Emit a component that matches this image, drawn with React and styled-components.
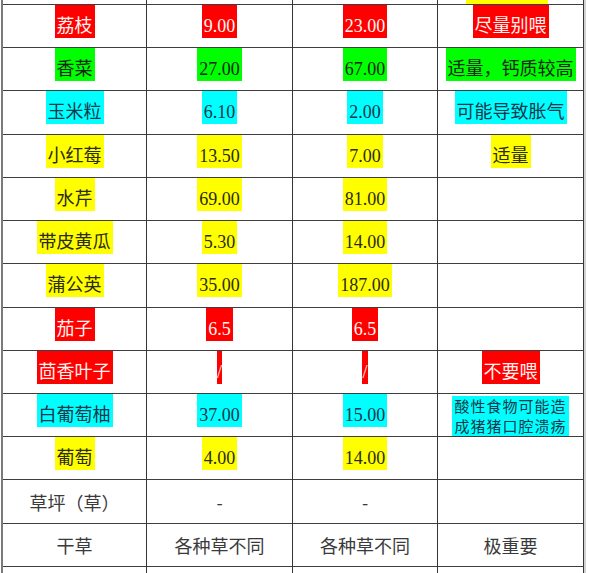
import styled, { createGlobalStyle } from "styled-components";

const GlobalStyle = createGlobalStyle`
  html, body {
    margin: 0;
    padding: 0;
    background: #ffffff;
    overflow: hidden;
  }
`;

// highlight colours copied from the sheet
const tones = {
  red: { bg: "#ff0000", fg: "#fff4f0" },
  green: { bg: "#00ff00", fg: "#152515" },
  cyan: { bg: "#00ffff", fg: "#17364a" },
  yellow: { bg: "#ffff00", fg: "#2b2b16" },
};

const rows = [
  [["荔枝", "red"], ["9.00", "red"], ["23.00", "red"], ["尽量别喂", "red"]],
  [["香菜", "green"], ["27.00", "green"], ["67.00", "green"], ["适量，钙质较高", "green"]],
  [["玉米粒", "cyan"], ["6.10", "cyan"], ["2.00", "cyan"], ["可能导致胀气", "cyan"]],
  [["小红莓", "yellow"], ["13.50", "yellow"], ["7.00", "yellow"], ["适量", "yellow"]],
  [["水芹", "yellow"], ["69.00", "yellow"], ["81.00", "yellow"], null],
  [["带皮黄瓜", "yellow"], ["5.30", "yellow"], ["14.00", "yellow"], null],
  [["蒲公英", "yellow"], ["35.00", "yellow"], ["187.00", "yellow"], null],
  [["茄子", "red"], ["6.5", "red"], ["6.5", "red"], null],
  [["茴香叶子", "red"], ["/", "red"], ["/", "red"], ["不要喂", "red"]],
  [["白葡萄柚", "cyan"], ["37.00", "cyan"], ["15.00", "cyan"], ["note", "cyan"]],
  [["葡萄", "yellow"], ["4.00", "yellow"], ["14.00", "yellow"], null],
  [["草坪（草）"], ["-"], ["-"], null],
  [["干草"], ["各种草不同"], ["各种草不同"], ["极重要"]],
];

const Page = styled.div`
  padding-left: 1px;
  width: 600px;
  height: 573px;
  box-sizing: border-box;
`;

const Table = styled.div`
  display: grid;
  grid-template-columns: 144px 146px 145px 146px;
  grid-template-rows: 5px repeat(13, 43.23px) 20px;
  width: max-content;
  border-left: 2px solid #7a7a7a;
  box-shadow: 2px 0 0 #d2d2d2;
`;

const Cell = styled.div`
  display: flex;
  justify-content: center;
  align-items: center;
  box-sizing: border-box;
  border-right: 1px solid #363636;
  border-bottom: 1px solid #3e3e3e;
  overflow: hidden;
`;

const Mark = styled.span`
  align-self: flex-start;
  display: inline-block;
  padding: ${(p) => (p.$tight ? "10px 0 1px" : "10px 2px 1px")};
  line-height: 22px;
  font-family: "Liberation Serif", "Noto Sans CJK SC", serif;
  font-size: 18px;
  white-space: nowrap;
  background: ${(p) => tones[p.$tone].bg};
  color: ${(p) => tones[p.$tone].fg};
`;

const Note = styled.span`
  align-self: flex-start;
  margin-top: 2px;
  display: inline-block;
  padding: 0 2px;
  font-family: "Noto Sans CJK SC", sans-serif;
  font-size: 15px;
  line-height: 20px;
  letter-spacing: 1px;
  text-align: center;
  background: ${(p) => tones[p.$tone].bg};
  color: ${(p) => tones[p.$tone].fg};
`;

const Plain = styled.span`
  font-family: "Noto Sans CJK SC", sans-serif;
  font-size: 18px;
  color: #3a3a3a;
`;

const CutBar = styled.div`
  align-self: flex-end;
  margin-left: -8px;
  width: 82px;
  height: 4px;
  background: #ffff00;
`;

const renderItem = (item) => {
  if (!item) return null;
  const [text, tone] = item;
  if (text === "note")
    return (
      <Note $tone={tone}>
        酸性食物可能造
        <br />
        成猪猪口腔溃疡
      </Note>
    );
  if (!tone) return <Plain>{text}</Plain>;
  return (
    <Mark $tone={tone} $tight={text === "/"}>
      {text}
    </Mark>
  );
};

const App = () => {
  return (
    <Page>
      <GlobalStyle />
      <Table>
        <Cell />
        <Cell />
        <Cell />
        <Cell>
          <CutBar />
        </Cell>
        {rows.map((row, i) =>
          row.map((item, j) => <Cell key={`${i}-${j}`}>{renderItem(item)}</Cell>)
        )}
        <Cell />
        <Cell />
        <Cell />
        <Cell />
      </Table>
    </Page>
  );
};

export default App;
